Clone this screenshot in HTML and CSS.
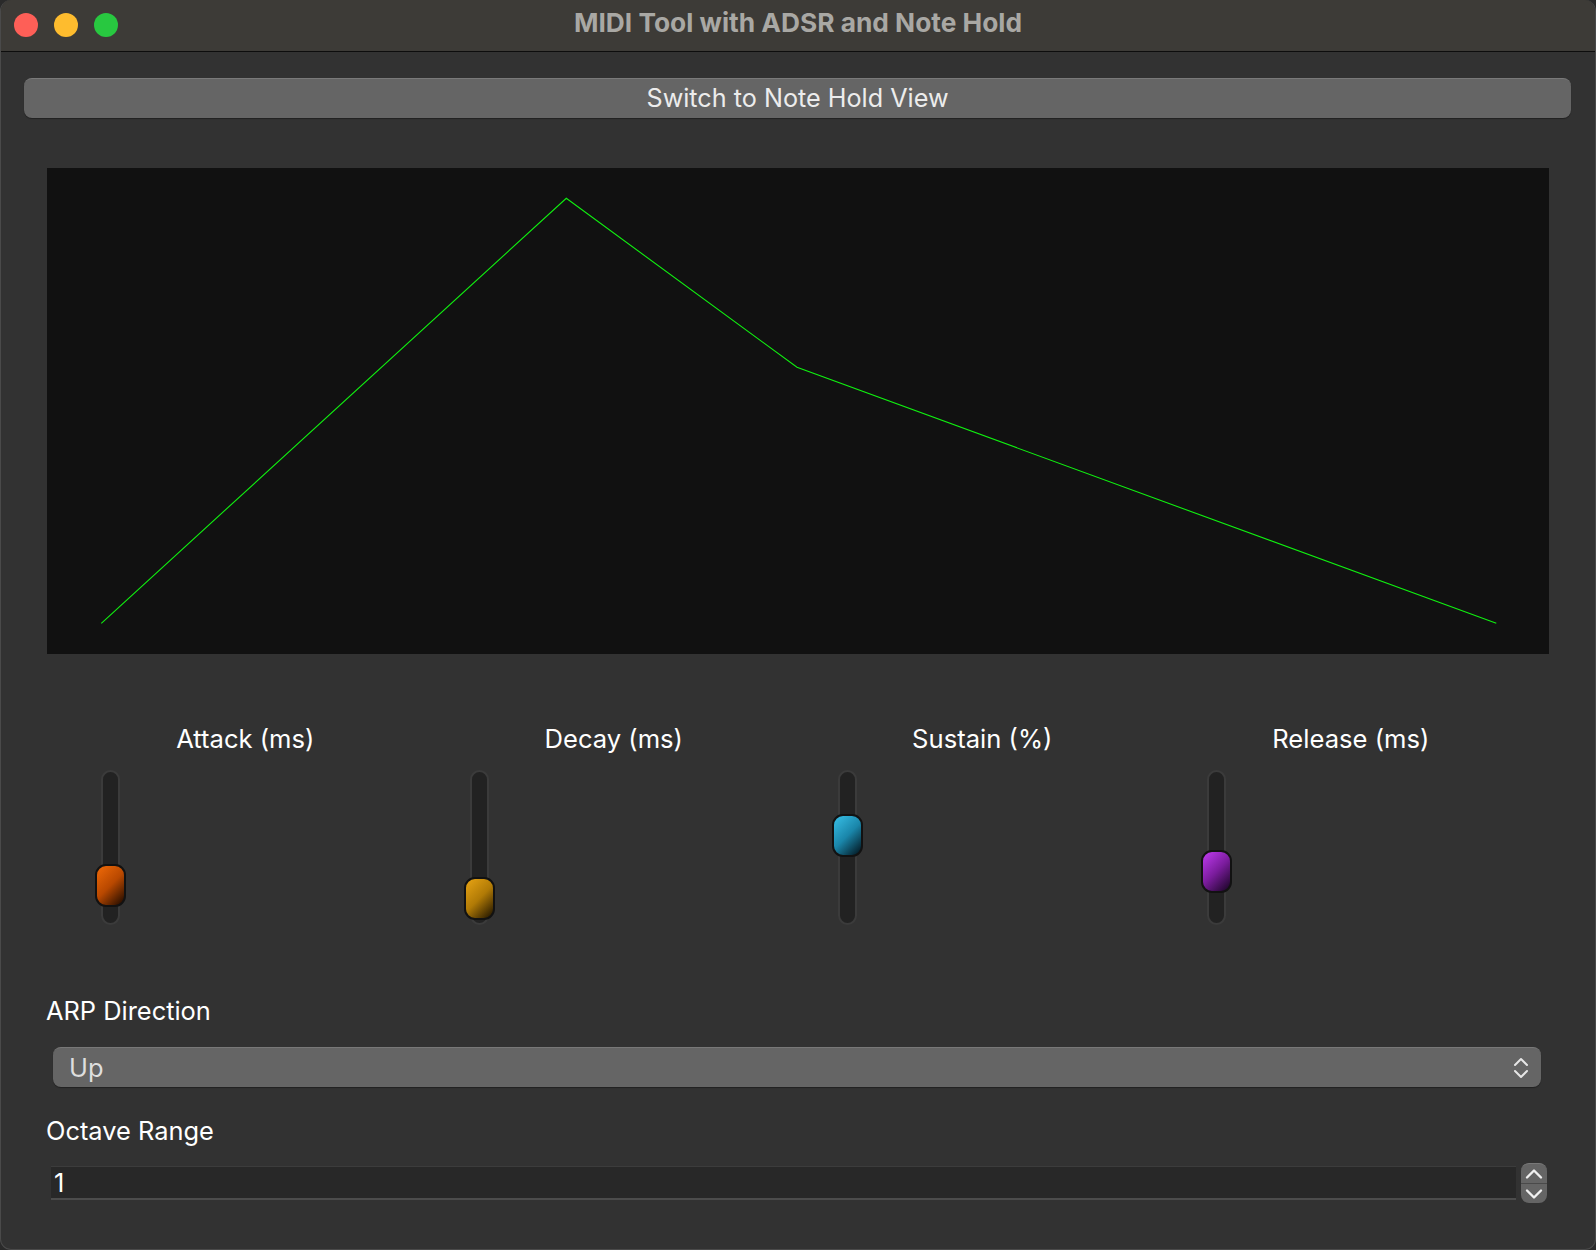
FILE: index.html
```html
<!DOCTYPE html>
<html>
<head>
<meta charset="utf-8">
<title>MIDI Tool with ADSR and Note Hold</title>
<link rel="stylesheet" href="styles.css">
</head>
<body>
<div class="window">
  <div class="titlebar">
    <div class="lights">
      <span class="light red"></span>
      <span class="light yellow"></span>
      <span class="light green"></span>
    </div>
    <div class="title">MIDI Tool with ADSR and Note Hold</div>
    <div class="spacer"></div>
  </div>
  <div class="main">
    <button class="switch-btn">Switch to Note Hold View</button>
    <div class="graph">
      <svg width="1504" height="486" viewBox="0 0 1504 486">
        <polyline points="54.3,455.3 519.3,30.3 750,199.3 1449.3,455.3" fill="none" stroke="#10f010" stroke-width="1.1"/>
      </svg>
    </div>
    <div class="sliders">
      <div class="col">
        <div class="slabel">Attack (ms)</div>
        <div class="track"><div class="handle attack" style="top:92px"></div></div>
      </div>
      <div class="col">
        <div class="slabel">Decay (ms)</div>
        <div class="track"><div class="handle decay" style="top:105px"></div></div>
      </div>
      <div class="col">
        <div class="slabel">Sustain (%)</div>
        <div class="track"><div class="handle sustain" style="top:42px"></div></div>
      </div>
      <div class="col">
        <div class="slabel">Release (ms)</div>
        <div class="track"><div class="handle release" style="top:78px"></div></div>
      </div>
    </div>
    <div class="flabel arp">ARP Direction</div>
    <div class="combo">
      <span class="combo-text">Up</span>
      <svg class="updown" width="16" height="24" viewBox="0 0 16 24">
        <polyline points="2,9 8,3 14,9" fill="none" stroke="#e6e6e6" stroke-width="2" stroke-linecap="round" stroke-linejoin="round"/>
        <polyline points="2,15 8,21 14,15" fill="none" stroke="#e6e6e6" stroke-width="2" stroke-linecap="round" stroke-linejoin="round"/>
      </svg>
    </div>
    <div class="flabel oct">Octave Range</div>
    <div class="spinrow">
      <div class="spinfield">1</div>
      <div class="spinbtns">
        <div class="sb up">
          <svg width="18" height="12" viewBox="0 0 18 12"><polyline points="2,9.5 9,2.5 16,9.5" fill="none" stroke="#f0f0f0" stroke-width="2.4" stroke-linecap="round" stroke-linejoin="round"/></svg>
        </div>
        <div class="sb down">
          <svg width="18" height="12" viewBox="0 0 18 12"><polyline points="2,2.5 9,9.5 16,2.5" fill="none" stroke="#f0f0f0" stroke-width="2.4" stroke-linecap="round" stroke-linejoin="round"/></svg>
        </div>
      </div>
    </div>
  </div>
</div>
</body>
</html>
```

FILE: styles.css
```css
* { box-sizing: border-box; }
html, body { margin: 0; padding: 0; }
body {
  background: #2a2a2a;
  width: 1596px;
  height: 1250px;
  overflow: hidden;
  font-family: "Inter", "Noto Sans", sans-serif;
}
.window {
  width: 1596px;
  height: 1250px;
  background: #323232;
  border-radius: 11px;
  overflow: hidden;
  border: 1px solid #4a4a4a;
  border-top: none;
}
.titlebar {
  height: 52px;
  background: #3d3b37;
  border-bottom: 1px solid #0d0d0d;
  display: grid;
  grid-template-columns: 1fr auto 1fr;
  align-items: center;
}
.lights {
  display: flex;
  gap: 16px;
  padding-left: 13px;
  margin-top: -2px;
}
.light {
  width: 24px;
  height: 24px;
  border-radius: 50%;
  display: block;
}
.red { background: #fe5f57; }
.yellow { background: #febc2e; }
.green { background: #28c840; }
.title {
  color: #a9a8a4;
  font-weight: 700;
  font-size: 26.3px;
  margin-top: -6px;
}
.main {
  padding: 26px 24px 0 23px;
}
.switch-btn {
  display: block;
  width: 100%;
  height: 40px;
  background: #656565;
  border: none;
  border-top: 1px solid #7a7a7a;
  border-radius: 8px;
  box-shadow: 0 1px 1px rgba(0,0,0,0.35);
  color: #ececec;
  font-family: inherit;
  font-size: 25.2px;
  padding: 0;
  line-height: 35px;
}
.graph {
  margin: 50px 22px 0 23px;
  height: 486px;
  background: #111111;
}
.graph svg { display: block; }
.sliders {
  margin: 70px 36px 0 37px;
  display: grid;
  grid-template-columns: repeat(4, 1fr);
}
.col {
  display: flex;
  flex-direction: column;
}
.slabel {
  text-align: center;
  color: #ffffff;
  font-size: 25.6px;
  line-height: 30px;
  height: 30px;
}
.track {
  position: relative;
  margin: 16px 0 0 40px;
  width: 19px;
  height: 155px;
  background: #222222;
  border: 2px solid #3b3b3b;
  border-radius: 10px;
}
.handle {
  position: absolute;
  left: -8px;
  width: 31px;
  height: 43px;
  border: 2px solid #121212;
  border-radius: 11px;
}
.attack { background: linear-gradient(135deg, #f06a08 0%, #b84800 50%, #180800 100%); }
.decay { background: linear-gradient(135deg, #e8a414 0%, #b07a06 50%, #1a1000 100%); }
.sustain { background: linear-gradient(135deg, #38c0e8 0%, #1a86aa 50%, #021018 100%); }
.release { background: linear-gradient(135deg, #c03cf0 0%, #7a1c9c 50%, #160420 100%); }
.flabel {
  color: #ffffff;
  font-size: 25.4px;
  line-height: 30px;
  margin-left: 22px;
}
.arp { margin-top: 71px; }
.combo {
  margin: 21px 30px 0 29px;
  height: 40px;
  background: #656565;
  border-top: 1px solid #787878;
  border-radius: 8px;
  box-shadow: 0 1px 1px rgba(0,0,0,0.35);
  display: flex;
  align-items: center;
  justify-content: space-between;
  padding: 0 12px 0 16px;
}
.combo-text {
  color: #dedede;
  font-size: 25.4px;
}
.updown { display: block; }
.oct { margin-top: 29px; }
.spinrow {
  margin: 17px 24px 0 27px;
  display: flex;
  align-items: center;
  gap: 5px;
}
.spinfield {
  flex: 1;
  height: 34px;
  background: #282828;
  border-top: 1px solid #3c3c3c;
  border-bottom: 2px solid #4c4c4c;
  color: #ffffff;
  font-size: 25.4px;
  line-height: 31px;
  padding-left: 3px;
}
.spinbtns {
  width: 26px;
  height: 40px;
  background: #656565;
  border-radius: 8px;
  border-top: 1px solid #787878;
  display: flex;
  flex-direction: column;
  overflow: hidden;
}
.sb {
  flex: 1;
  display: flex;
  align-items: center;
  justify-content: center;
}
.sb svg { display: block; }
.sb.up { border-bottom: 1px solid #4a4a4a; }
```
